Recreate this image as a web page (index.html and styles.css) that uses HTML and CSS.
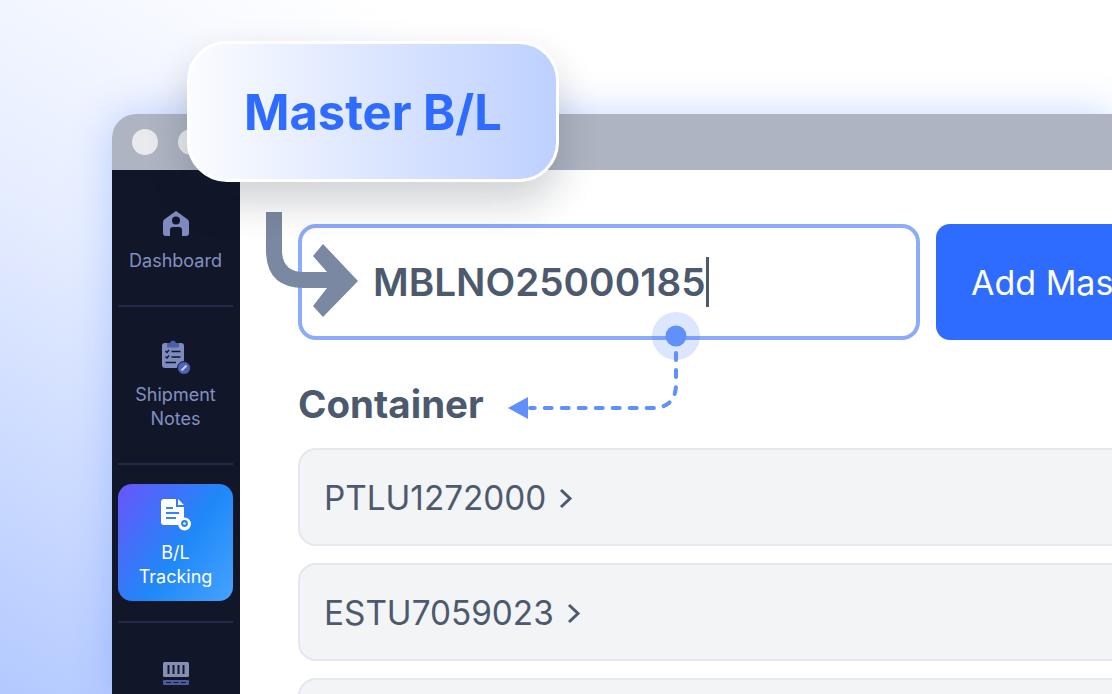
FILE: index.html
```html
<!DOCTYPE html>
<html lang="en">

<head>
    <meta charset="UTF-8">
    <title>Master B/L</title>
    <link rel="stylesheet" href="styles.css">
</head>

<body>
    <div class="window">
        <div class="titlebar">
            <span class="dot"></span>
            <span class="dot"></span>
        </div>
        <div class="app">
            <div class="sidebar">
                <div class="nav-item">
                    <svg class="nav-icon" viewBox="0 0 36 36">
                        <path fill="#7f8bc0" d="M18 7 L29.800 15.600 Q31 16.600 31 18.500 V29 Q31 32 28 32 H24 V26 Q24 23 21 23 H15 Q12 23 12 26 V32 H8 Q5 32 5 29 V18.500 Q5 16.600 6.200 15.600 Z" />
                        <circle cx="18" cy="16.500" r="4" fill="#111729" />
                    </svg>
                    <span>Dashboard</span>
                </div>
                <div class="nav-line"></div>
                <div class="nav-item">
                    <svg class="nav-icon" viewBox="0 0 36 36">
                        <rect x="4" y="5" width="22" height="25" rx="3" fill="#7f8bc0" />
                        <path fill="#4a5fa8" d="M9 5 H12 Q12.500 2.500 15 2.500 Q17.500 2.500 18 5 H21 V8.500 Q21 9.500 20 9.500 H10 Q9 9.500 9 8.500 Z" />
                        <path fill="none" stroke="#111729" stroke-width="1.300" d="M7.500 13 L9 14.500 L11 12 M7.500 18.500 L9 20 L11 17.500 M13.500 13.500 H22.500 M13.500 19 H22.500 M7.500 24.500 H18" />
                        <circle cx="26" cy="30" r="6.500" fill="#4a63b5" stroke="#111729" stroke-width="1" />
                        <path stroke="#c9d2f0" stroke-width="2" d="M23.500 32.500 L28.500 27.500" />
                    </svg>
                    <span>Shipment<br>Notes</span>
                </div>
                <div class="nav-line"></div>
                <div class="nav-item active">
                    <svg class="nav-icon" viewBox="0 0 36 36">
                        <path fill="#fff" d="M6 3 H18 V11 H26 V26 Q26 29 23 29 H6 Q3 29 3 26 V6 Q3 3 6 3 Z M20 3 L26 9 H20 Z" />
                        <path stroke="#3a80f8" stroke-width="2" d="M8 12 H15 M8 17 H21 M8 22 H18" />
                        <circle cx="26.500" cy="28" r="6.500" fill="#fff" />
                        <circle cx="26.500" cy="27.500" r="3.400" fill="#2d80f6" />
                        <circle cx="26.500" cy="27.500" r="1.300" fill="#fff" />
                    </svg>
                    <span>B/L<br>Tracking</span>
                </div>
                <div class="nav-line"></div>
                <div class="nav-item">
                    <svg class="nav-icon" viewBox="0 0 36 36">
                        <rect x="5" y="8" width="26" height="15" rx="1.500" fill="#858fb6" />
                        <path stroke="#111729" stroke-width="2" d="M10.500 11 V20 M15.500 11 V20 M20.500 11 V20 M25.500 11 V20" />
                        <rect x="5" y="26" width="26" height="5" rx="1" fill="#4a5a9c" />
                        <path stroke="#111729" stroke-width="1" d="M8 28.500 H13 M15.500 28.500 H20.500 M23 28.500 H28" />
                    </svg>
                </div>
            </div>
            <div class="main">
                <div class="form-row">
                    <div class="bl-input">MBLNO25000185<span class="caret"></span></div>
                    <div class="add-btn">Add Master B/L</div>
                </div>
                <h2 class="section-title">Container</h2>
                <div class="row-list">
                    <div class="row">PTLU1272000
                        <svg class="chevron" viewBox="0 0 14 21"><path d="M2 2 L11 10.500 L2 19" /></svg>
                    </div>
                    <div class="row">ESTU7059023
                        <svg class="chevron" viewBox="0 0 14 21"><path d="M2 2 L11 10.500 L2 19" /></svg>
                    </div>
                    <div class="row"></div>
                </div>
            </div>
        </div>
    </div>

    <!-- things laid over the window -->
    <svg class="overlay" viewBox="0 0 1112 694">
        <path fill="#7b88a1" d="M266 212 H282 V250 Q282 272 304 272 H327 L313 256 L323 244 L358 281 L323 317 L313 306 L327 288 H304 Q266 288 266 250 Z" />
        <circle cx="676" cy="336" r="24" fill="#2e6bff" fill-opacity="0.17" />
        <circle cx="676" cy="336" r="10.500" fill="#6090fb" />
        <path fill="none" stroke="#6090fb" stroke-width="4" stroke-linecap="round" stroke-dasharray="7 10" d="M676 353 V384 Q676 408 652 408 H530" />
        <path fill="#6090fb" d="M508 408 L528 397 V419 Z" />
    </svg>
    <div class="callout">Master B/L</div>
</body>

</html>
```
FILE: styles.css
```css
* {
    margin: 0;
    padding: 0;
    box-sizing: border-box;
}

body {
    position: relative;
    width: 1112px;
    height: 694px;
    overflow: hidden;
    padding: 114px 0 0 112px;
    font-family: Inter, "Liberation Sans", sans-serif;
    background: linear-gradient(30deg, #b3c9ff 0%, #e6edff 38%, #fff 68%);
}

.window {
    width: 1000px;
    height: 580px;
    border-radius: 24px 0 0 0;
    background-color: #fff;
    box-shadow: 0 0 40px rgba(46, 107, 255, 0.28);
    overflow: hidden;
}

.titlebar {
    display: flex;
    align-items: center;
    gap: 20px;
    height: 56px;
    padding-left: 20px;
    background-color: #aeb4c1;
}

.dot {
    width: 26px;
    height: 26px;
    border-radius: 50%;
    background-color: #e9eaed;
}

.app {
    display: flex;
}

.sidebar {
    display: flex;
    flex-direction: column;
    gap: 20px;
    flex: none;
    width: 128px;
    height: 524px;
    padding: 22px 7px 0 6px;
    background-color: #111729;
}

.nav-line {
    flex: none;
    height: 2px;
    margin-bottom: -1px;
    background-color: #222a4a;
}

.nav-item {
    flex: none;
    padding: 12px 0;
    border-radius: 14px;
    text-align: center;
    font-size: 18px;
    line-height: 24px;
    color: #8390c2;
}

.nav-item.active {
    color: #fff;
    background: linear-gradient(125deg, #6a55fb 0%, #1f88f8 55%, #45a3ff 100%);
}

.nav-icon {
    display: block;
    width: 36px;
    height: 36px;
    margin: 0 auto 9px;
}

.main {
    flex: 1;
    min-width: 0;
    overflow: hidden;
    padding: 54px 0 0 58px;
}

.form-row {
    display: flex;
    gap: 16px;
}

.bl-input {
    display: flex;
    align-items: center;
    flex: none;
    width: 622px;
    height: 116px;
    padding-left: 71px;
    border: 4px solid #8dabfb;
    border-radius: 18px;
    font-size: 38.700px;
    font-weight: 600;
    color: #4d5a6e;
}

.caret {
    width: 3px;
    height: 50px;
    background-color: #4d5a6e;
}

.add-btn {
    display: flex;
    align-items: center;
    flex: none;
    width: 400px;
    height: 116px;
    padding-left: 35px;
    border-radius: 14px;
    background-color: #2e6bff;
    color: #fff;
    font-size: 34px;
    white-space: nowrap;
}

.section-title {
    margin: 39px 0 19px 0;
    font-size: 38.500px;
    line-height: 50px;
    font-weight: 700;
    color: #4d5a6e;
}

.row-list {
    display: flex;
    flex-direction: column;
    gap: 17px;
    width: 1000px;
}

.row {
    display: flex;
    align-items: center;
    gap: 13px;
    flex: none;
    height: 98px;
    padding: 2px 0 0 24px;
    border: 2px solid #e5e7ee;
    border-radius: 18px;
    background-color: #f3f4f6;
    font-size: 33.300px;
    color: #4d5a6e;
}

.chevron {
    width: 14px;
    height: 21px;
    fill: none;
    stroke: #4d5a6e;
    stroke-width: 3;
}

.overlay {
    position: absolute;
    left: 0;
    top: 0;
    width: 1112px;
    height: 694px;
}

.callout {
    position: absolute;
    left: 187px;
    top: 41px;
    display: flex;
    align-items: center;
    justify-content: center;
    width: 372px;
    height: 141px;
    padding-top: 2px;
    border: 3px solid #fff;
    border-radius: 40px;
    background: linear-gradient(90deg, #fbfcff 0%, #bdd0ff 100%);
    box-shadow: 0 20px 40px rgba(17, 23, 41, 0.2);
    font-size: 48.800px;
    font-weight: 700;
    color: #2e6bff;
}
```
